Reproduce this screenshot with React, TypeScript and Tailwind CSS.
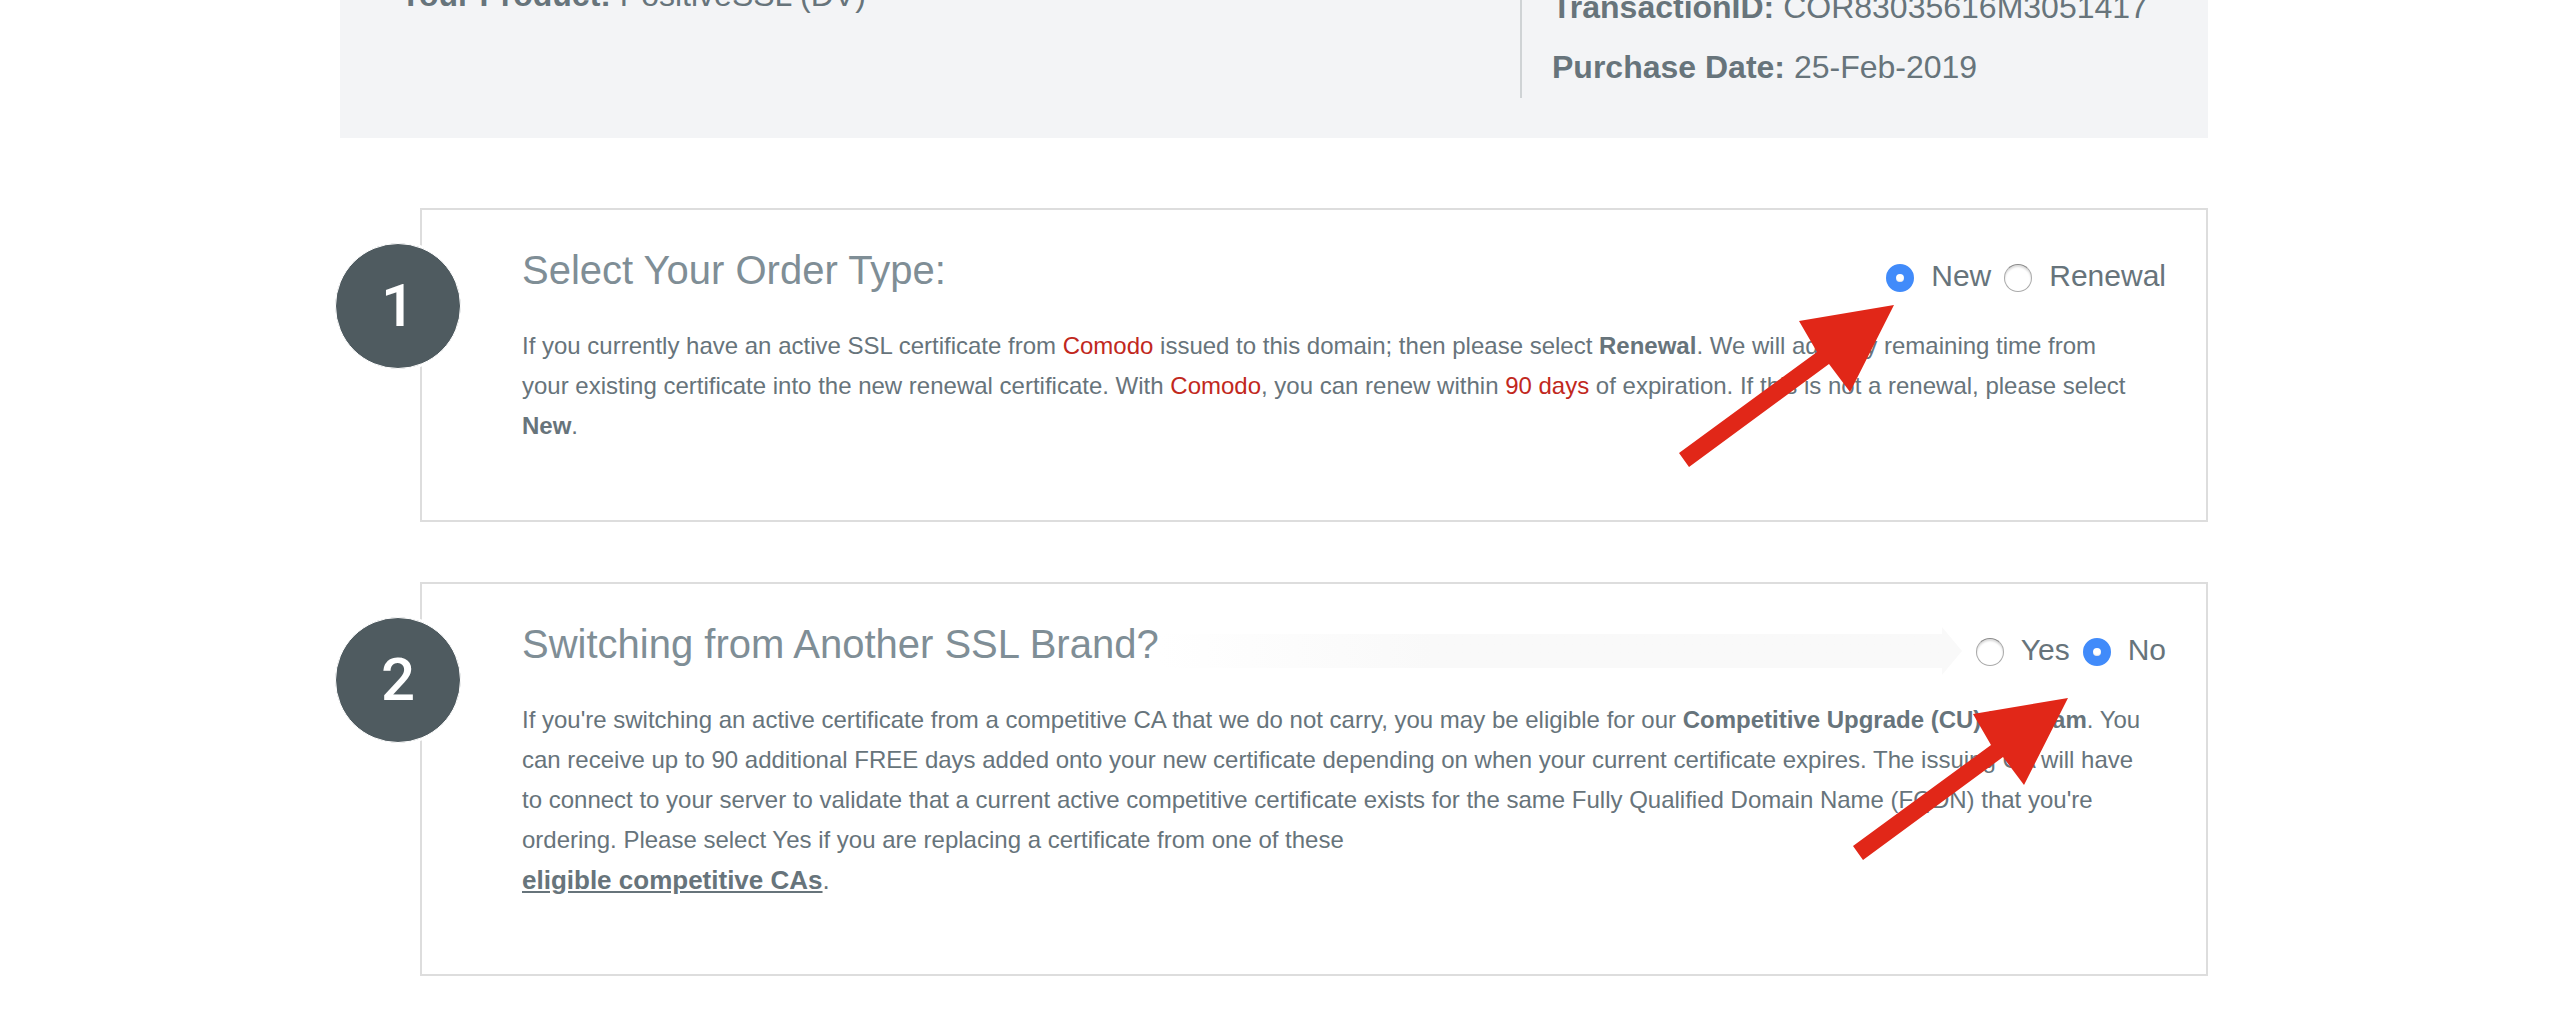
import { useId, useState, type ReactNode } from "react";

function PointerArrow({ className }: { className: string }) {
  return (
    <svg
      className={`pointer-events-none absolute h-[162px] w-[216px] ${className}`}
      viewBox="0 0 216 162"
      fill="#e12718"
      aria-hidden="true"
    >
      <polygon points="215,0 120,16 138,47 0,148 10,162 150,59 171,87" />
    </svg>
  );
}

function Options({
  legend,
  options,
  initial,
}: {
  legend: string;
  options: string[];
  initial: string;
}) {
  const name = useId();
  const [value, setValue] = useState(initial);
  return (
    <fieldset className="flex gap-[13px] pt-3.5" aria-label={legend}>
      {options.map((option) => (
        <label
          key={option}
          className="flex items-center gap-[17px] text-[30px] leading-10 text-[#67747b]"
        >
          <input
            type="radio"
            name={name}
            value={option}
            checked={value === option}
            onChange={() => setValue(option)}
            className="mt-1 size-7 appearance-none rounded-full border border-[#aaaaaa] border-t-[#8a8a8a] bg-white shadow-[inset_0_2px_2px_rgba(0,0,0,0.14)] checked:border-[10px] checked:border-[#418bfa] checked:shadow-[inset_0_-1px_1px_rgba(0,0,0,0.1)]"
          />
          {option}
        </label>
      ))}
    </fieldset>
  );
}

function FadingArrow() {
  return (
    <div className="mt-[11px] mr-3.5 flex h-12 flex-1 items-center" aria-hidden="true">
      <div className="h-[34px] flex-1 bg-linear-to-r from-white via-[#f9f9f9] via-35% to-[#f9f9f9]" />
      <svg className="h-12 w-5" viewBox="0 0 20 48" fill="#f9f9f9">
        <polygon points="0,0 20,24 0,48" />
      </svg>
    </div>
  );
}

function Step({
  number,
  title,
  banner,
  options,
  initial,
  pointer,
  children,
}: {
  number: number;
  title: string;
  banner?: boolean;
  options: string[];
  initial: string;
  pointer: string;
  children: ReactNode;
}) {
  return (
    <section className="relative ml-20 border-2 border-[#dddddd] pt-8 pr-10 pb-[74px] pl-[100px]">
      <div className="absolute top-[33px] -left-[87px] flex size-[126px] items-center justify-center rounded-full border border-white bg-[#4f5b60] font-[Roboto,sans-serif] text-[60px] leading-none font-medium text-white ring-2 ring-white">
        {number}
      </div>
      <div className="mb-9 flex h-12 items-start justify-between">
        <h2 className="text-[40px] leading-[56px] text-[#7f8e96]">{title}</h2>
        {banner && <FadingArrow />}
        <Options legend={title} options={options} initial={initial} />
      </div>
      <div className="pr-6 text-2xl leading-10 text-[#67747b]">{children}</div>
      <PointerArrow className={pointer} />
    </section>
  );
}

function Highlight({ children }: { children: ReactNode }) {
  return <span className="text-[#c1281d]">{children}</span>;
}

export default function App() {
  return (
    <div className="overflow-hidden bg-white pr-3 pb-12 font-['Liberation_Sans',Arial,sans-serif]">
      <main className="mx-auto flex max-w-[1868px] flex-col">
        <header className="-mt-[35px] mb-[70px] flex bg-[#f3f4f6] pb-10 text-[32px] leading-[60px] text-[#67747b]">
          <p className="flex-1 pl-[60px]">
            <strong>Your Product:</strong> PositiveSSL (DV)
          </p>
          <div className="w-[688px] border-l-2 border-[#cfd3d5] pt-3 pb-px pl-[30px]">
            <p>
              <strong>TransactionID:</strong> COR83035616M3051417
            </p>
            <p>
              <strong>Purchase Date:</strong> 25-Feb-2019
            </p>
          </div>
        </header>

        <div className="flex flex-col gap-[60px]">
          <Step
            number={1}
            title="Select Your Order Type:"
            options={["New", "Renewal"]}
            initial="New"
            pointer="top-[95px] right-[311px]"
          >
            <p>
              If you currently have an active SSL certificate from <Highlight>Comodo</Highlight>{" "}
              issued to this domain; then please select <strong>Renewal</strong>. We will add any
              remaining time from your existing certificate into the new renewal certificate. With{" "}
              <Highlight>Comodo</Highlight>, you can renew within <Highlight>90 days</Highlight> of
              expiration. If this is not a renewal, please select <strong>New</strong>.
            </p>
          </Step>

          <Step
            number={2}
            title="Switching from Another SSL Brand?"
            banner
            options={["Yes", "No"]}
            initial="No"
            pointer="top-[114px] right-[137px]"
          >
            <p>
              If you're switching an active certificate from a competitive CA that we do not carry,
              you may be eligible for our <strong>Competitive Upgrade (CU) Program</strong>. You can
              receive up to 90 additional FREE days added onto your new certificate depending on
              when your current certificate expires. The issuing CA will have to connect to your
              server to validate that a current active competitive certificate exists for the same
              Fully Qualified Domain Name (FQDN) that you're ordering. Please select Yes if you are
              replacing a certificate from one of these
            </p>
            <p className="text-[26px] leading-10">
              <a href="#competitive-cas" className="font-bold underline">
                eligible competitive CAs
              </a>
              .
            </p>
          </Step>
        </div>
      </main>
    </div>
  );
}
